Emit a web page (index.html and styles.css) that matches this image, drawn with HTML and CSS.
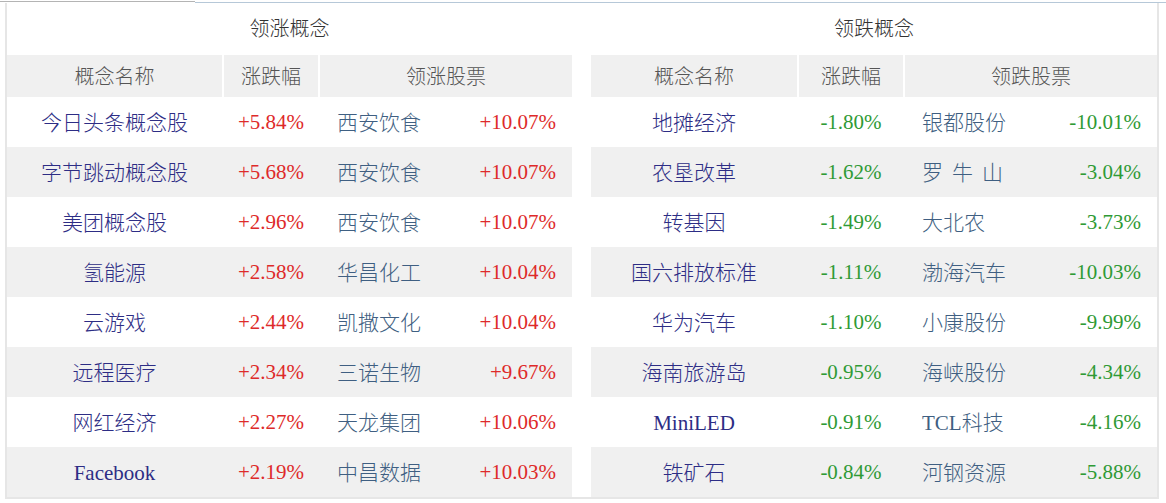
FILE: index.html
```html
<!DOCTYPE html>
<html lang="zh-CN">
<head>
<meta charset="utf-8">
<title>领涨领跌概念</title>
<link rel="stylesheet" href="styles.css">
</head>
<body>
<div class="topbar"><div class="tab-left"></div><div class="tab-right"></div></div>
<div class="panel">
  <section class="board up">
    <div class="title">领涨概念</div>
    <div class="row head"><div>概念名称</div><div>涨跌幅</div><div>领涨股票</div></div>
    <div class="row"><div class="name">今日头条概念股</div><div class="pct en">+5.84%</div><div class="stock"><span class="sname">西安饮食</span><span class="pct en">+10.07%</span></div></div>
    <div class="row alt"><div class="name">字节跳动概念股</div><div class="pct en">+5.68%</div><div class="stock"><span class="sname">西安饮食</span><span class="pct en">+10.07%</span></div></div>
    <div class="row"><div class="name">美团概念股</div><div class="pct en">+2.96%</div><div class="stock"><span class="sname">西安饮食</span><span class="pct en">+10.07%</span></div></div>
    <div class="row alt"><div class="name">氢能源</div><div class="pct en">+2.58%</div><div class="stock"><span class="sname">华昌化工</span><span class="pct en">+10.04%</span></div></div>
    <div class="row"><div class="name">云游戏</div><div class="pct en">+2.44%</div><div class="stock"><span class="sname">凯撒文化</span><span class="pct en">+10.04%</span></div></div>
    <div class="row alt"><div class="name">远程医疗</div><div class="pct en">+2.34%</div><div class="stock"><span class="sname">三诺生物</span><span class="pct en">+9.67%</span></div></div>
    <div class="row"><div class="name">网红经济</div><div class="pct en">+2.27%</div><div class="stock"><span class="sname">天龙集团</span><span class="pct en">+10.06%</span></div></div>
    <div class="row alt"><div class="name"><span class="en">Facebook</span></div><div class="pct en">+2.19%</div><div class="stock"><span class="sname">中昌数据</span><span class="pct en">+10.03%</span></div></div>
  </section>
  <section class="board down">
    <div class="title">领跌概念</div>
    <div class="row head"><div>概念名称</div><div>涨跌幅</div><div>领跌股票</div></div>
    <div class="row"><div class="name">地摊经济</div><div class="pct en">-1.80%</div><div class="stock"><span class="sname">银都股份</span><span class="pct en">-10.01%</span></div></div>
    <div class="row alt"><div class="name">农垦改革</div><div class="pct en">-1.62%</div><div class="stock"><span class="sname">罗<span class="gap"></span>牛<span class="gap"></span>山</span><span class="pct en">-3.04%</span></div></div>
    <div class="row"><div class="name">转基因</div><div class="pct en">-1.49%</div><div class="stock"><span class="sname">大北农</span><span class="pct en">-3.73%</span></div></div>
    <div class="row alt"><div class="name">国六排放标准</div><div class="pct en">-1.11%</div><div class="stock"><span class="sname">渤海汽车</span><span class="pct en">-10.03%</span></div></div>
    <div class="row"><div class="name">华为汽车</div><div class="pct en">-1.10%</div><div class="stock"><span class="sname">小康股份</span><span class="pct en">-9.99%</span></div></div>
    <div class="row alt"><div class="name">海南旅游岛</div><div class="pct en">-0.95%</div><div class="stock"><span class="sname">海峡股份</span><span class="pct en">-4.34%</span></div></div>
    <div class="row"><div class="name"><span class="en">MiniLED</span></div><div class="pct en">-0.91%</div><div class="stock"><span class="sname"><span class="en">TCL</span>科技</span><span class="pct en">-4.16%</span></div></div>
    <div class="row alt"><div class="name">铁矿石</div><div class="pct en">-0.84%</div><div class="stock"><span class="sname">河钢资源</span><span class="pct en">-5.88%</span></div></div>
  </section>
</div>
</body>
</html>
```
FILE: styles.css
```css
* { box-sizing: border-box; }
body {
  margin: 0;
  background: #fff;
  font-family: "Noto Sans CJK SC", "Noto Sans", sans-serif;
  font-size: 21px;
  font-weight: 300;
  color: #333;
}
.topbar {
  display: flex;
  height: 3px;
}
.tab-left {
  width: 195px;
  margin-top: 1px;
  border-top: 1px solid #b4b4b4;
}
.tab-right {
  flex: 1;
  margin-top: 2px;
  border-top: 1px solid #b6c8d8;
}
.panel {
  margin-left: 5px;
  width: 1154px;
  display: flex;
  gap: 19px;
  border-left: 2px solid #e6e6e6;
  border-right: 2px solid #e6e6e6;
  border-bottom: 2px solid #e6e6e6;
}
.board.up { width: 565px; }
.board.down { width: 566px; }
.title {
  height: 52px;
  padding-bottom: 4px;
  display: flex;
  align-items: center;
  justify-content: center;
  font-size: 20px;
  color: #333;
}
.row {
  display: grid;
  column-gap: 2px;
  height: 50px;
  padding-bottom: 3px;
  align-items: center;
  text-align: center;
}
.up .row { grid-template-columns: 215px 94px 1fr; }
.down .row { grid-template-columns: 206px 104px 1fr; }
.row.head {
  height: 42px;
  padding-bottom: 0;
  align-items: stretch;
  color: #555;
  font-size: 20px;
}
.row.head > div {
  background: #f0f0f0;
  display: flex;
  align-items: center;
  justify-content: center;
  padding-bottom: 2px;
}
.row.alt { background: #f0f0f0; }
.en {
  font-family: "Liberation Serif", "DejaVu Serif", serif;
  font-size: 21px;
  font-weight: 400;
}
.pct.en { padding-top: 4px; }
.gap {
  display: inline-block;
  width: 9px;
}
.name { color: #2d2d85; }
.stock {
  display: flex;
  justify-content: space-between;
  align-items: center;
  padding: 0 16px 0 17px;
}
.sname { color: #3f5f82; }
.up .pct { color: #de2a2a; }
.down .pct { color: #2f9a35; }
```
